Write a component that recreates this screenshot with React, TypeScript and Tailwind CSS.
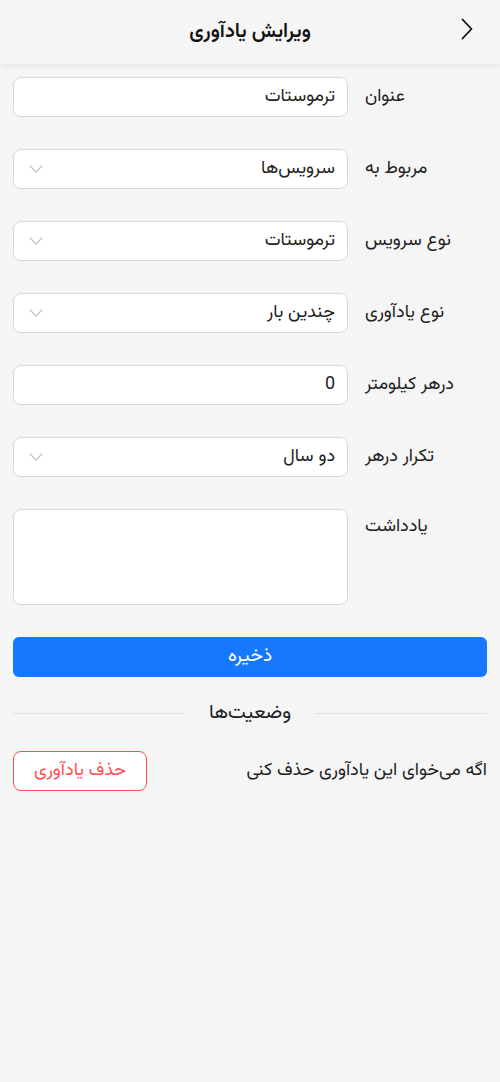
import { ChevronDown } from "lucide-react";

const font = { fontFamily: '"Vazirmatn", "Noto Sans Arabic", "DejaVu Sans", sans-serif' };

type Field = {
  label: string;
  value: string;
  select?: boolean;
};

const fields: Field[] = [
  { label: "عنوان", value: "ترموستات" },
  { label: "مربوط به", value: "سرویس‌ها", select: true },
  { label: "نوع سرویس", value: "ترموستات", select: true },
  { label: "نوع یادآوری", value: "چندین بار", select: true },
  { label: "درهر کیلومتر", value: "0" },
  { label: "تکرار درهر", value: "دو سال", select: true },
];

function Row({ field }: { field: Field }) {
  return (
    <div className="flex items-start gap-[17px]">
      <div className="w-[122px] h-10 leading-10 text-left text-[18px] text-[#222]">
        {field.label}
      </div>
      <div className="flex-1 h-10 flex items-center justify-between rounded-lg border border-[#d9d9d9] bg-white pr-[12px] pl-[10px]">
        <span className="text-[18px] text-[#222]">{field.value}</span>
        {field.select && (
          <ChevronDown className="h-6 w-6 text-[#bfbfbf]" strokeWidth={1.1} />
        )}
      </div>
    </div>
  );
}

export default function App() {
  return (
    <div dir="rtl" style={font} className="min-h-[1082px] w-[500px] bg-[#f5f5f5]">
      {/* Header */}
      <header className="relative h-16 flex items-center justify-center bg-[#f5f5f5] shadow-[0_2px_6px_rgba(0,0,0,0.08)]">
        <svg
          className="absolute right-[27px] top-[18px]"
          width="12"
          height="22"
          viewBox="0 0 12 22"
          fill="none"
          stroke="#111"
          strokeWidth="1.8"
          strokeLinecap="round"
          strokeLinejoin="round"
        >
          <polyline points="1.5,1.5 10.5,11 1.5,20.5" />
        </svg>
        <h1 className="text-[20px] font-semibold text-[#111]">ویرایش یادآوری</h1>
      </header>

      <div className="px-[13px] pt-[13px] flex flex-col gap-8">
        {fields.map((f, i) => (
          <Row key={i} field={f} />
        ))}

        {/* Note */}
        <div className="flex items-start gap-[17px]">
          <div className="w-[122px] h-9 leading-9 text-left text-[18px] text-[#222]">
            یادداشت
          </div>
          <div className="flex-1 h-24 rounded-lg border border-[#d9d9d9] bg-white" />
        </div>

        <button className="h-10 w-full rounded-md bg-[#1677ff] text-white text-[19px]">
          ذخیره
        </button>
      </div>

      {/* Divider */}
      <div className="px-[13px] mt-[21px] flex items-center gap-6">
        <div className="flex-1 h-px bg-[#e3e3e3]" />
        <span className="text-[20px] text-[#222]">وضعیت‌ها</span>
        <div className="flex-1 h-px bg-[#e3e3e3]" />
      </div>

      {/* Delete */}
      <div className="px-[13px] mt-[23px] flex items-center justify-between">
        <span className="text-[18px] text-[#222]">اگه می‌خوای این یادآوری حذف کنی</span>
        <button className="h-10 w-[134px] rounded-lg border border-[#ff4d4f] bg-white text-[#ff4d4f] text-[18px]">
          حذف یادآوری
        </button>
      </div>
    </div>
  );
}
